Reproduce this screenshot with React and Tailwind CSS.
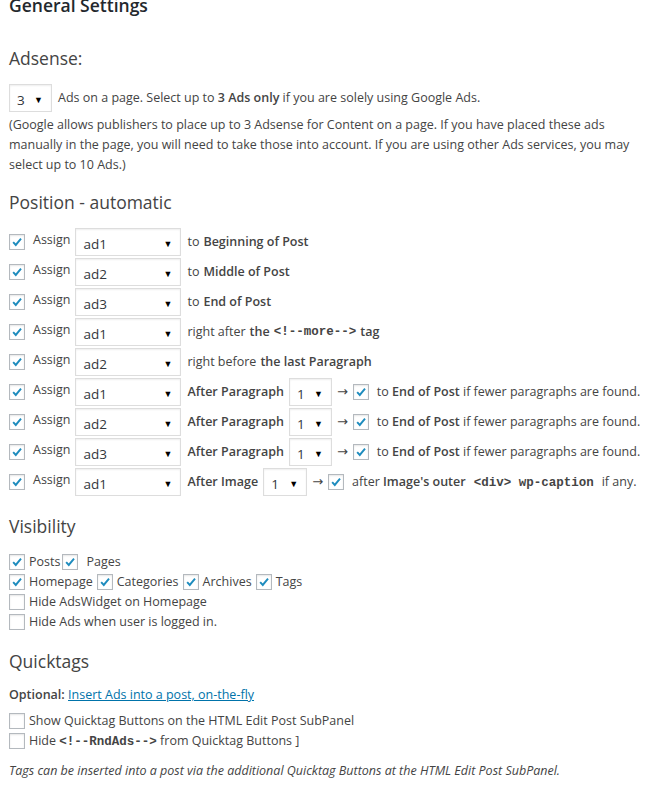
import { useState } from 'react'

const font = { fontFamily: '"Open Sans", "Noto Sans", sans-serif' }

function Check({ defaultChecked = false }) {
  const [on, setOn] = useState(defaultChecked)
  return (
    <button
      type="button"
      onClick={() => setOn(!on)}
      className="relative inline-flex h-4 w-4 shrink-0 items-center justify-center border border-[#b4b9be] bg-white shadow-[inset_0_1px_2px_rgba(0,0,0,0.1)]"
    >
      {on ? (
        <svg viewBox="0 0 16 16" className="h-4 w-4">
          <path d="M3.6 8.2 L6.6 11.4 L12.6 4.2" fill="none" stroke="#1e8cbe" strokeWidth="2.2" />
        </svg>
      ) : null}
    </button>
  )
}

function Select({ value, width }) {
  return (
    <span
      className={`inline-flex h-7 shrink-0 items-center justify-between border border-[#ddd] bg-white pl-[7px] pr-2 pt-1 text-[13.5px] text-[#32373c] shadow-[inset_0_1px_2px_rgba(0,0,0,0.07)] ${width}`}
    >
      <span>{value}</span>
      <span className="text-[9px] text-black">▼</span>
    </span>
  )
}

const mono = 'font-["Liberation_Mono"] font-bold text-[12.5px]'

function Arrow() {
  return <span className="mx-[5px] font-['DejaVu_Sans'] text-[13px]">→</span>
}

function Row({ ad, children }) {
  return (
    <div className="flex h-[30px] items-center">
      <Check defaultChecked />
      <span className="ml-[8px] mr-[5px] -mt-1">Assign</span>
      <Select value={ad} width="w-[106px]" />
      <span className="ml-[6px] flex items-center whitespace-nowrap">{children}</span>
    </div>
  )
}

function ParagraphRow({ ad }) {
  return (
    <Row ad={ad}>
      <b className="font-semibold">After Paragraph</b>
      <span className="ml-[5px]"><Select value="1" width="w-[43px]" /></span>
      <Arrow />
      <Check defaultChecked />
      <span className="ml-[8px]">
        to <b className="font-semibold">End of Post</b> if fewer paragraphs are found.
      </span>
    </Row>
  )
}

export default function App() {
  return (
    <div style={font} className="h-[786px] overflow-hidden bg-white px-[9px] text-[12.5px] leading-5 text-[#444]">
      <h2 className="-mt-[5px] text-[17.5px] font-semibold leading-[20px] text-[#23282d]">General Settings</h2>

      <h3 className="mt-[31px] text-[17.5px] leading-6 text-[#444]">Adsense:</h3>
      <div className="mt-[14px] flex items-center">
        <Select value="3" width="w-[43px]" />
        <span className="ml-[6px]">
          Ads on a page. Select up to <b className="font-semibold">3 Ads only</b> if you are solely using Google Ads.
        </span>
      </div>
      <p className="mt-[3px] pr-[8px]">
        (Google allows publishers to place up to 3 Adsense for Content on a page. If you have placed these ads
        manually in the page, you will need to take those into account. If you are using other Ads services, you may
        select up to 10 Ads.)
      </p>

      <h3 className="mt-[15px] text-[17.5px] leading-6">Position - automatic</h3>
      <div className="mt-[13px]">
        <Row ad="ad1">
          to <b className="ml-1 font-semibold">Beginning of Post</b>
        </Row>
        <Row ad="ad2">
          to <b className="ml-1 font-semibold">Middle of Post</b>
        </Row>
        <Row ad="ad3">
          to <b className="ml-1 font-semibold">End of Post</b>
        </Row>
        <Row ad="ad1">
          right after <b className="ml-1 font-semibold">the</b>
          <code className={`ml-1 ${mono}`}>&lt;!--more--&gt;</code>
          <b className="ml-1 font-semibold">tag</b>
        </Row>
        <Row ad="ad2">
          right before <b className="ml-1 font-semibold">the last Paragraph</b>
        </Row>
        <ParagraphRow ad="ad1" />
        <ParagraphRow ad="ad2" />
        <ParagraphRow ad="ad3" />
        <Row ad="ad1">
          <b className="font-semibold">After Image</b>
          <span className="ml-[5px]"><Select value="1" width="w-[44px]" /></span>
          <Arrow />
          <Check defaultChecked />
          <span className="ml-[8px]">
            after <b className="font-semibold">Image's outer</b>
            <code className={`mx-2 ${mono}`}>&lt;div&gt; wp-caption</code>
            if any.
          </span>
        </Row>
      </div>

      <h3 className="mt-[17px] text-[17.5px] leading-6">Visibility</h3>
      <div className="mt-[14px]">
        <div className="flex h-5 items-center">
          <Check defaultChecked />
          <span className="ml-[4px] mr-[2px]">Posts</span>
          <Check defaultChecked />
          <span className="ml-[8px]">Pages</span>
        </div>
        <div className="flex h-5 items-center">
          <Check defaultChecked />
          <span className="ml-[4px] mr-[4px]">Homepage</span>
          <Check defaultChecked />
          <span className="ml-[4px] mr-[4px]">Categories</span>
          <Check defaultChecked />
          <span className="ml-[4px] mr-[4px]">Archives</span>
          <Check defaultChecked />
          <span className="ml-[4px]">Tags</span>
        </div>
        <div className="flex h-5 items-center">
          <Check />
          <span className="ml-[4px]">Hide AdsWidget on Homepage</span>
        </div>
        <div className="flex h-5 items-center">
          <Check />
          <span className="ml-[4px]">Hide Ads when user is logged in.</span>
        </div>
      </div>

      <h3 className="mt-[17px] text-[17.5px] leading-6">Quicktags</h3>
      <p className="mt-[12px]">
        <b className="font-semibold">Optional:</b>{' '}
        <a href="#" className="text-[#0073aa] underline">Insert Ads into a post, on-the-fly</a>
      </p>
      <div className="mt-[6px]">
        <div className="flex h-5 items-center">
          <Check />
          <span className="ml-[4px]">Show Quicktag Buttons on the HTML Edit Post SubPanel</span>
        </div>
        <div className="flex h-5 items-center">
          <Check />
          <span className="ml-[4px]">
            Hide <code className={mono}>&lt;!--RndAds--&gt;</code> from Quicktag Buttons ]
          </span>
        </div>
      </div>
      <p className="mt-[10px] italic">
        Tags can be inserted into a post via the additional Quicktag Buttons at the HTML Edit Post SubPanel.
      </p>
    </div>
  )
}
